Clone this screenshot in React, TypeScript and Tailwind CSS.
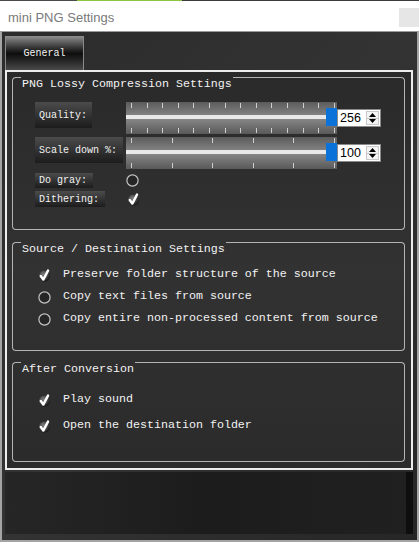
import { type ReactNode } from 'react';

const mono = { fontFamily: '"Liberation Mono", "DejaVu Sans Mono", monospace' };

function Check() {
    return (
        <svg width="13" height="13" viewBox="0 0 13 13" className="shrink-0">
            <defs>
                <radialGradient id="ck" cx="0.4" cy="0.35" r="0.7">
                    <stop offset="0" stopColor="#808080" />
                    <stop offset="1" stopColor="#121212" />
                </radialGradient>
            </defs>
            <circle cx="6.5" cy="7" r="5.5" fill="url(#ck)" />
            <path d="M2.8 7 L5.3 10.6 L10 1.6" fill="none" stroke="#fff" strokeWidth="2.4" strokeLinejoin="round" strokeLinecap="round" />
        </svg>
    );
}

function Radio() {
    return (
        <svg width="13" height="13" viewBox="0 0 13 13" className="shrink-0">
            <circle cx="6.5" cy="6.5" r="5.6" fill="#262626" stroke="#c4c4c4" strokeWidth="1.2" />
        </svg>
    );
}

function Group({ title, className, children }: { title: string; className?: string; children: ReactNode }) {
    return (
        <div className={'flex flex-col ' + (className ?? '')}>
            <div className="flex h-[15px]">
                <div className="w-[9px] rounded-tl-[4px] border-t border-l border-[#b4b4b4]" />
                <div className="px-px text-[11.67px] leading-[15px] whitespace-pre text-[#f2f2f2]" style={mono}>
                    {title}
                </div>
                <div className="flex-1 rounded-tr-[4px] border-t border-r border-[#b4b4b4]" />
            </div>
            <div className="flex flex-1 flex-col rounded-b-[4px] border-r border-b border-l border-[#b4b4b4]">{children}</div>
        </div>
    );
}

function Ticks({ n, top }: { n: number; top: boolean }) {
    return (
        <div className={'flex justify-between pr-[2px] pl-[5px] ' + (top ? 'h-[6px] items-start pt-px' : 'h-[8px] items-start pt-[2px]')}>
            {Array.from({ length: n }).map((_, i) => (
                <div key={i} className="h-[5px] w-px bg-[#cfcfcf]" />
            ))}
        </div>
    );
}

function Slider({ ticks }: { ticks: number }) {
    return (
        <div className="flex h-[32px] w-[211px] flex-col bg-gradient-to-b from-[#5c5c5c] via-[#8a8a8a] to-[#595959]">
            <Ticks n={ticks} top />
            <div className="flex h-[18px] items-center">
                <div className="h-[4px] flex-1 bg-[#e8e8e8]" />
                <div className="h-[18px] w-[11px] bg-[#0a72d8]" />
            </div>
            <Ticks n={ticks} top={false} />
        </div>
    );
}

function SpinBox({ value }: { value: string }) {
    return (
        <div className="mt-[7px] flex h-[18px] w-[44px] border border-[#8a8a8a] bg-white">
            <div className="flex-1 pl-[2px] text-[12.5px] leading-[16px] text-black" style={{ fontFamily: '"Liberation Sans", Arial, sans-serif' }}>
                {value}
            </div>
            <div className="my-px mr-px flex w-[13px] flex-col border border-[#c8c8c8] bg-[#f4f4f4]">
                <div className="flex flex-1 items-center justify-center border-b border-[#c8c8c8]">
                    <svg width="7" height="4" viewBox="0 0 7 4">
                        <path d="M0 4 L3.5 0 L7 4 Z" fill="#000" />
                    </svg>
                </div>
                <div className="flex flex-1 items-center justify-center">
                    <svg width="7" height="4" viewBox="0 0 7 4">
                        <path d="M0 0 L3.5 4 L7 0 Z" fill="#000" />
                    </svg>
                </div>
            </div>
        </div>
    );
}

function Label({ text, className }: { text: string; className: string }) {
    return (
        <div
            className={'flex items-center pl-[4px] text-[10px] whitespace-pre text-[#f2f2f2] bg-gradient-to-b from-[#4c4c4c] to-[#1c1c1c] ' + className}
            style={mono}
        >
            {text}
        </div>
    );
}

function Item({ checked, text, h }: { checked: boolean; text: string; h: string }) {
    return (
        <div className={'flex items-center gap-[12px] ' + h}>
            {checked ? <Check /> : <Radio />}
            <span className="text-[11.67px] whitespace-pre text-[#f2f2f2]" style={mono}>
                {text}
            </span>
        </div>
    );
}

export default function App() {
    return (
        <div className="flex h-[542px] w-[419px] flex-col overflow-hidden bg-white">
            <div className="flex h-px">
                <div className="w-[77px] bg-[#4a4a4a]" />
                <div className="w-[105px] bg-[#8cc63f]" />
                <div className="flex-1 bg-[#3a3a3a]" />
            </div>
            <div className="flex h-[30px] items-start justify-between bg-white">
                <div className="pt-[7px] pl-[8px] text-[13px] text-[#7a7a7a]" style={{ fontFamily: '"Liberation Sans", Arial, sans-serif' }}>
                    mini PNG Settings
                </div>
                <div className="mt-[7px] h-[19px] w-[20px] bg-[#e6e6e6]" />
            </div>
            <div className="flex flex-1 flex-col border-x-2 border-t border-b-2 border-x-[#a4a4a4] border-t-[#9a9a9a] border-b-[#a4a4a4] bg-gradient-to-br from-[#2c2c2c] via-[#333333] to-[#262626] pt-[4px] pr-[4px] pl-[3px]">
                <div className="flex h-[34px] w-[79px] items-center justify-center border-x border-t border-[#8a8a8a] bg-gradient-to-b from-[#8a8a8a] via-[#0e0e0e] to-[#4a4a4a] pb-[1px] text-[10px] text-[#f4f4f4]" style={mono}>
                    General
                </div>
                <div className="flex h-[400px] flex-col border-2 border-[#ececec] bg-gradient-to-b from-[#2a2a2a] via-[#323232] to-[#2b2b2b] pt-[5px] pr-[6px] pb-[6px] pl-[5px]">
                    <Group title="PNG Lossy Compression Settings" className="h-[153px]">
                        <div className="flex flex-col pt-[10px] pl-[22px]">
                            <div className="flex h-[32px] items-start">
                                <div className="w-[91px]">
                                    <Label text="Quality:" className="h-[26px] w-[57px]" />
                                </div>
                                <Slider ticks={14} />
                                <SpinBox value="256" />
                            </div>
                            <div className="mt-[3px] flex h-[32px] items-start">
                                <div className="w-[91px]">
                                    <Label text="Scale down %:" className="h-[26px] w-[88px]" />
                                </div>
                                <Slider ticks={6} />
                                <SpinBox value="100" />
                            </div>
                            <div className="mt-[4px] flex h-[15px] items-center">
                                <div className="w-[91px]">
                                    <Label text="Do gray:" className="h-[15px] w-[58px]" />
                                </div>
                                <Radio />
                            </div>
                            <div className="mt-[3px] flex h-[16px] items-center">
                                <div className="w-[92px]">
                                    <Label text="Dithering:" className="h-[16px] w-[70px]" />
                                </div>
                                <Check />
                            </div>
                        </div>
                    </Group>
                    <Group title="Source / Destination Settings" className="mt-[12px] h-[109px]">
                        <div className="flex flex-col pt-[7px] pl-[25px]">
                            <Item checked text="Preserve folder structure of the source" h="h-[22px]" />
                            <Item checked={false} text="Copy text files from source" h="h-[22px]" />
                            <Item checked={false} text="Copy entire non-processed content from source" h="h-[22px]" />
                        </div>
                    </Group>
                    <Group title="After Conversion" className="mt-[11px] flex-1">
                        <div className="flex flex-col pt-[10px] pl-[25px]">
                            <Item checked text="Play sound" h="h-[26px]" />
                            <Item checked text="Open the destination folder" h="h-[26px]" />
                        </div>
                    </Group>
                </div>
                <div className="flex flex-1 pt-[2px] pb-[6px]">
                    <div className="w-[401px] bg-gradient-to-r from-[#262626] via-[#1c1c1c] to-[#202020]" />
                    <div className="flex-1 bg-[#0e0e0e]" />
                </div>
            </div>
        </div>
    );
}
